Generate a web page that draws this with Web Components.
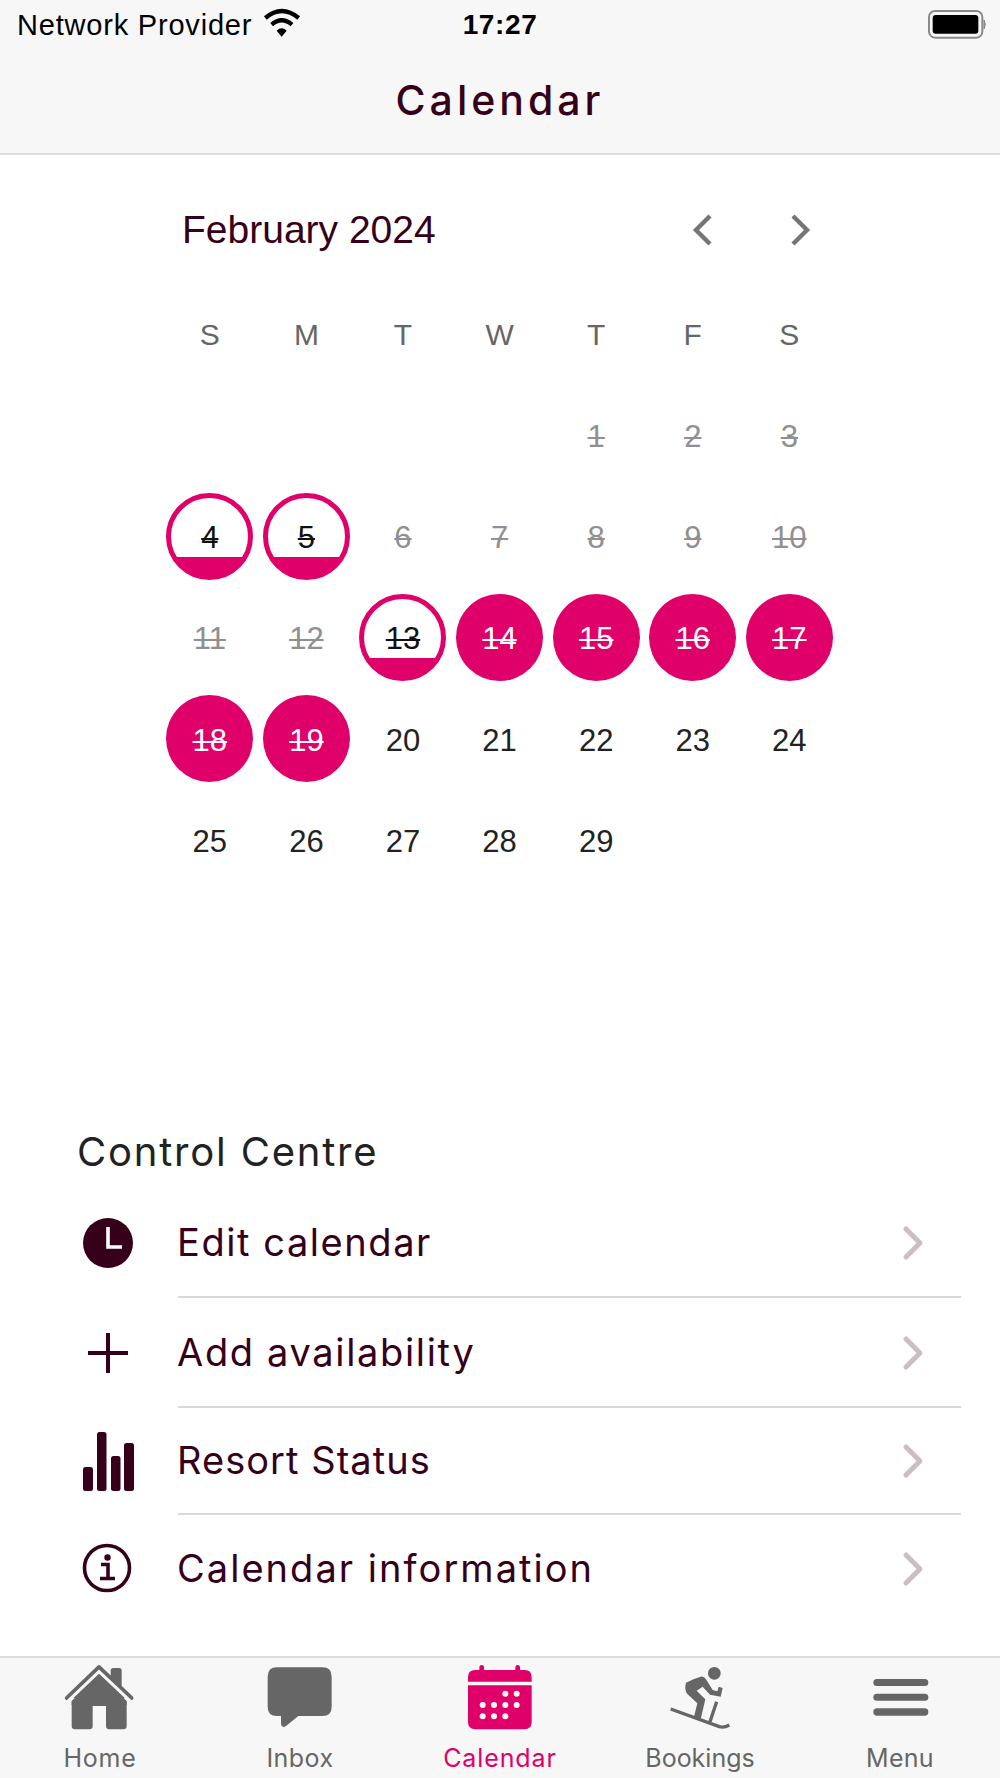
<!DOCTYPE html>
<html lang="en"><head><meta charset="utf-8"><title>Calendar</title>
<style>
html,body{margin:0;padding:0;background:#fff}
</style></head><body>
<app-page>
  <status-bar></status-bar>
  <nav-title>Calendar</nav-title>
  <month-calendar></month-calendar>
  <control-centre>
    <control-row h="109" ls="1.57" label="Edit calendar">
      <svg slot="icon" viewBox="0 0 60 60" width="60" height="60"><circle cx="30" cy="30" r="25" fill="#36001a"/><path d="M30 14V34H44" fill="none" stroke="#fff" stroke-width="3.6"/></svg>
    </control-row>
    <control-row h="110" ls="1.66" label="Add availability">
      <svg slot="icon" viewBox="0 0 60 60" width="60" height="60"><path d="M30 10V50M10 30H50" fill="none" stroke="#36001a" stroke-width="4"/></svg>
    </control-row>
    <control-row h="107" ls="1.05" label="Resort Status">
      <svg slot="icon" viewBox="0 0 60 60" width="60" height="60" fill="#36001a"><rect x="5" y="36" width="10" height="24" rx="2.5"/><rect x="19" y="1" width="9.5" height="59" rx="2.5"/><rect x="33" y="25" width="9.5" height="35" rx="2.5"/><rect x="46" y="12" width="10" height="48" rx="2.5"/></svg>
    </control-row>
    <control-row h="107" ls="2.04" label="Calendar information" last>
      <svg slot="icon" viewBox="0 0 60 60" width="60" height="60"><circle cx="29" cy="30" r="22.5" fill="none" stroke="#36001a" stroke-width="3.6"/><circle cx="29.5" cy="19.5" r="3.2" fill="#36001a"/><path d="M23 26.5H30V40M22 40.5H37" fill="none" stroke="#36001a" stroke-width="3.6"/></svg>
    </control-row>
  </control-centre>
  <tab-bar>
    <tab-item ls=".75" label="Home">
      <svg slot="icon" viewBox="180 60 240 225" width="80" height="75" fill="#666"><path d="M297 104L380 183V258Q380 268 370 268H328Q318 268 318 258V198H278V258Q278 268 268 268H225Q215 268 215 258V183Z"/><path d="M200 174L292 85Q297 81 302 85L332 113V92Q332 84 340 84H357Q365 84 365 92V144L395 174" fill="#666" stroke="none"/><path d="M201 174L297 82L394 174" fill="none" stroke="#666" stroke-width="13" stroke-linecap="round" stroke-linejoin="round"/><path d="M200 187L297 95L395 187" fill="none" stroke="#f7f7f7" stroke-width="9"/><path d="M297 106L380 185V195H215V185Z"/></svg>
    </tab-item>
    <tab-item ls=".45" label="Inbox">
      <svg slot="icon" viewBox="780 60 240 225" width="80" height="75" fill="#666"><path d="M831 82H967Q995 82 995 110V200Q995 228 967 228H895L858 258Q845 266 843 252V228H831Q803 228 803 200V110Q803 82 831 82Z"/></svg>
    </tab-item>
    <tab-item ls=".9" label="Calendar" active>
      <svg slot="icon" viewBox="0 0 240 225" width="80" height="75" fill="#e0006a"><path d="M24 65V52Q24 30 46 30H58V22A7 7 0 0 1 72 22V30H166V22A7 7 0 0 1 180 22V30H194Q215 30 215 52V65Z"/><path d="M24 76H215V186Q215 208 194 208H46Q24 208 24 186Z"/><g fill="#f7f7f7"><circle cx="136" cy="101" r="9"/><circle cx="170" cy="101" r="9"/><circle cx="68" cy="135" r="9"/><circle cx="102" cy="135" r="9"/><circle cx="136" cy="135" r="9"/><circle cx="170" cy="135" r="9"/><circle cx="68" cy="169" r="9"/><circle cx="102" cy="169" r="9"/><circle cx="136" cy="169" r="9"/></g></svg>
    </tab-item>
    <tab-item ls="0" label="Bookings">
      <svg slot="icon" viewBox="0 0 240 225" width="80" height="75" fill="#666"><circle cx="163" cy="40" r="19"/><path d="M78 68Q100 56 122 50Q132 48 138 58L158 90L172 94L176 80L188 84L182 110L150 104L128 80L110 92L136 118L122 178L102 170L112 130L82 102Q72 90 78 68Z"/><path d="M170 125L150 185M32 147L178 200Q192 204 208 195" fill="none" stroke="#666" stroke-width="10"/></svg>
    </tab-item>
    <tab-item ls=".28" label="Menu">
      <svg slot="icon" viewBox="1080 60 240 225" width="80" height="75" fill="#666"><rect x="1120" y="117" width="165" height="21" rx="10.5"/><rect x="1120" y="161" width="165" height="21" rx="10.5"/><rect x="1120" y="205" width="165" height="22" rx="11"/></svg>
    </tab-item>
  </tab-bar>
</app-page>
<script>
function def(name, css, html, init){
  customElements.define(name, class extends HTMLElement{
    connectedCallback(){
      if(this.shadowRoot) return;
      const r=this.attachShadow({mode:'open'});
      const body=typeof html==='function'?html(this):html;
      r.innerHTML='<style>'+css+'</style>'+body;
      if(init) init(this,r);
    }
  });
}
const SANS='"Liberation Sans",Arial,sans-serif', GEO='Inter,"Noto Sans",sans-serif';
def('app-page',`:host{display:flex;flex-direction:column;width:1000px;height:1778px;overflow:hidden;background:#fff}`,`<slot></slot>`);
def('status-bar',`
:host{display:flex;align-items:center;height:50px;background:#f7f7f7;color:#000;font:400 29px ${SANS};position:relative}
.net{margin-left:17px;letter-spacing:.8px;white-space:nowrap}
.wifi{margin-left:4px;margin-top:-3px}
.time{position:absolute;left:0;right:0;text-align:center;font-weight:700;font-size:28px;letter-spacing:.6px}
.bat{margin-left:auto;margin-right:5px}
`,`<span class="net">Network Provider</span>
<svg class="wifi" width="50" height="40" viewBox="0 0 150 120"><path d="M28 42Q77 0 128 42M47 62Q77 36 108 62" fill="none" stroke="#000" stroke-width="13"/><path d="M62 80L77 98L92 80Q77 66 62 80Z"/></svg>
<span class="time">17:27</span>
<svg class="bat" width="75" height="40" viewBox="0 0 225 120"><rect x="27" y="18" width="160" height="80" rx="18" fill="none" stroke="#8a8a8a" stroke-width="6"/><rect x="38" y="30" width="137" height="56" rx="9"/><path d="M192 45Q200 58 192 72Z" fill="#8a8a8a" stroke="#8a8a8a" stroke-width="3"/></svg>`);
def('nav-title',`
:host{display:flex;align-items:center;justify-content:center;height:105px;padding-bottom:4px;box-sizing:border-box;background:#f7f7f7;border-bottom:2px solid #dcdcdc;color:#36001a;font:500 41px ${GEO};letter-spacing:4px}
`,`<slot></slot>`);
const arrow=d=>`<svg width="40" height="40" viewBox="0 0 40 40"><path d="${d}" fill="none" stroke="#757575" stroke-width="4.4"/></svg>`;
const days=[['',''],['',''],['',''],['',''],[1,'p'],[2,'p'],[3,'p'],[4,'h'],[5,'h'],[6,'p'],[7,'p'],[8,'p'],[9,'p'],[10,'p'],[11,'p'],[12,'p'],[13,'h'],[14,'f'],[15,'f'],[16,'f'],[17,'f'],[18,'f'],[19,'f'],[20,''],[21,''],[22,''],[23,''],[24,''],[25,''],[26,''],[27,''],[28,''],[29,'']];
def('month-calendar',`
:host{display:block;width:677px;margin:45px auto 0;font-family:${SANS}}
.head{display:flex;align-items:center;height:60px;padding:0 19px 0 20.5px;gap:57px;color:#36001a;font-size:39px}
.head span{flex:1}
.head svg{display:block}
.week,.grid{display:grid;grid-template-columns:repeat(7,96.6px)}
.week{height:60px;margin-top:43px;align-items:center;justify-items:center;color:#666;font-size:30px;padding-top:4px;box-sizing:border-box}
.grid{grid-auto-rows:101.4px;margin-top:21px;justify-items:center;align-items:center}
`,()=>`<div class="head"><span>February 2024</span>${arrow('M27 6L13 20L27 34')}${arrow('M13 6L27 20L13 34')}</div>
<div class="week">${[...'SMTWTFS'].map(d=>`<span>${d}</span>`).join('')}</div>
<div class="grid">${days.map(([n,s])=>`<cal-day state="${s}">${n}</cal-day>`).join('')}</div>`);
def('cal-day',`
:host{display:flex;align-items:center;justify-content:center;width:87px;height:87px;box-sizing:border-box;border-radius:50%;padding-top:4px;font-size:31px;color:#222;text-decoration-thickness:1.5px}
:host([state="p"]){color:#909090;text-decoration:line-through 1.5px}
:host([state="h"]){border:5px solid #e0006a;color:#111;text-decoration:line-through 1.5px;background:linear-gradient(#fff 0,#fff calc(100% - 18px),#e0006a calc(100% - 18px));background-origin:padding-box}
:host([state="f"]){background:#e0006a;color:#fff;text-decoration:line-through 1.5px}
`,`<slot></slot>`);
def('control-centre',`
:host{display:block;margin-top:236px;padding-left:78px;padding-right:39px}
h2{margin:0 0 12px;height:50px;font:400 40px/50px ${GEO};color:#222;letter-spacing:1.8px;margin-left:-1px}
`,`<h2>Control Centre</h2><slot></slot>`);
def('control-row',`
:host{display:flex;height:var(--h);color:#36001a;font:400 38px ${GEO}}
.ic{width:100px;flex:none;display:flex;align-items:center}
.ic ::slotted(svg){display:block}
.c{flex:1;display:flex;align-items:center;justify-content:space-between;border-bottom:2px solid #d9d9d9;box-sizing:border-box;padding-right:36px}
.c span{margin-left:-1px;letter-spacing:var(--ls)}
.c svg{margin-top:2px}
:host([last]) .c{border-bottom:0}
`,el=>{el.style.setProperty('--h',el.getAttribute('h')+'px');el.style.setProperty('--ls',el.getAttribute('ls')+'px');return `<div class="ic"><slot name="icon"></slot></div><div class="c"><span>${el.getAttribute('label')}</span><svg width="24" height="38" viewBox="0 0 24 38"><path d="M5 5L19 19L5 33" fill="none" stroke="#cdbdc5" stroke-width="5" stroke-linecap="round" stroke-linejoin="round"/></svg></div>`});
def('tab-bar',`
:host{display:grid;grid-template-columns:repeat(5,200px);height:122px;margin-top:auto;box-sizing:border-box;background:#f7f7f7;border-top:2px solid #dcdcdc}
`,`<slot></slot>`);
def('tab-item',`
:host{display:flex;flex-direction:column;align-items:center;padding-top:2px;color:#666;font:400 25px/30px ${GEO}}
:host([active]){color:#e0006a}
::slotted(svg){display:block}
span{margin-top:8px;letter-spacing:var(--ls)}
`,el=>{el.style.setProperty('--ls',el.getAttribute('ls')+'px');return `<slot name="icon"></slot><span>${el.getAttribute('label')}</span>`});
</script>
</body></html>
